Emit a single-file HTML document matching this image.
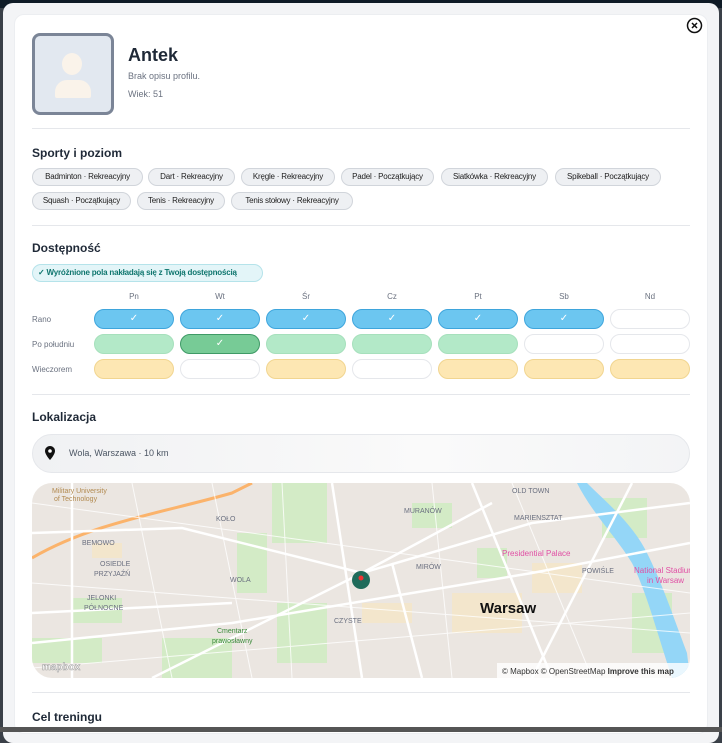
<!DOCTYPE html>
<html><head><meta charset="utf-8"><style>
*{box-sizing:border-box;margin:0;padding:0}
body{width:722px;height:732px;overflow:hidden;background:#3a4048;font-family:"Liberation Sans",sans-serif;color:#1f2937;position:relative}
.top{position:absolute;left:0;top:0;width:722px;height:8px;background:#0f1b26}
.outer{position:absolute;left:3px;top:3px;width:716px;height:740px;background:#f3f4f6;border-radius:10px}
.card{position:absolute;left:14px;top:14px;width:694px;height:720px;background:#fff;border-radius:10px;border:1px solid #eceef1}
.bar{position:absolute;left:0;top:727px;width:722px;height:5px;background:#555}
.abs{position:absolute}
.hr{position:absolute;left:32px;width:658px;height:1px;background:#e5e7eb}
h3{position:absolute;left:32px;font-size:12px;font-weight:bold;color:#1f2937}
.chip{position:absolute;height:18px;border:1px solid #d1d5db;background:#eef0f3;border-radius:9px;font-size:8px;line-height:16px;text-align:center;color:#222;white-space:nowrap;overflow:hidden;letter-spacing:-0.2px}
.cell{position:absolute;width:80px;height:20px;border-radius:10px;border:1px solid #e5e7eb;background:#fff;color:#fff;font-size:10px;text-align:center;line-height:18px}
.b{background:#6cc6f0;border-color:#3ea5dc}
.g{background:#b3e9c8;border-color:#a6e0bc}
.gd{background:#77cb96;border-color:#3f9a66}
.y{background:#fde7b3;border-color:#f1d590}
.lbl{position:absolute;left:32px;font-size:8px;color:#6b7280}
.day{position:absolute;width:80px;text-align:center;font-size:8px;color:#6b7280}
</style></head><body>
<div class="top"></div>
<div class="outer"></div>
<div class="card"></div>
<svg class="abs" style="left:686px;top:17px" width="17" height="17" viewBox="0 0 17 17"><circle cx="8.5" cy="8.5" r="7" fill="none" stroke="#111" stroke-width="1.5"/><path d="M6 6l5 5M11 6l-5 5" stroke="#111" stroke-width="1.5"/></svg>
<div class="abs" style="left:32px;top:33px;width:82px;height:82px;border:3px solid #7b8597;border-radius:8px;background:#e2e8f0;overflow:hidden">
<div class="abs" style="left:27px;top:17px;width:20px;height:22px;border-radius:50%;background:#faf3ea"></div>
<div class="abs" style="left:20px;top:44px;width:36px;height:18px;border-radius:12px 12px 2px 2px;background:#faf3ea"></div>
</div>
<div class="abs" style="left:128px;top:45px;font-size:18px;font-weight:bold;color:#1f2937">Antek</div>
<div class="abs" style="left:128px;top:71px;font-size:9px;color:#6b7280">Brak opisu profilu.</div>
<div class="abs" style="left:128px;top:89px;font-size:9px;color:#6b7280">Wiek: 51</div>
<div class="hr" style="top:128px"></div>
<h3 style="top:146px">Sporty i poziom</h3>
<div class="chip" style="left:32px;top:168px;width:111px">Badminton · Rekreacyjny</div>
<div class="chip" style="left:148px;top:168px;width:87px">Dart · Rekreacyjny</div>
<div class="chip" style="left:241px;top:168px;width:94px">Kręgle · Rekreacyjny</div>
<div class="chip" style="left:341px;top:168px;width:93px">Padel · Początkujący</div>
<div class="chip" style="left:441px;top:168px;width:107px">Siatkówka · Rekreacyjny</div>
<div class="chip" style="left:555px;top:168px;width:106px">Spikeball · Początkujący</div>
<div class="chip" style="left:32px;top:192px;width:99px">Squash · Początkujący</div>
<div class="chip" style="left:137px;top:192px;width:88px">Tenis · Rekreacyjny</div>
<div class="chip" style="left:231px;top:192px;width:122px">Tenis stołowy · Rekreacyjny</div>
<div class="hr" style="top:225px"></div>
<h3 style="top:241px">Dostępność</h3>
<div class="abs" style="left:32px;top:264px;width:231px;height:18px;border:1px solid #b5e3ea;background:#e3f5f8;border-radius:9px;font-size:8px;font-weight:bold;color:#0f766e;line-height:16px;padding-left:5px;white-space:nowrap;overflow:hidden;letter-spacing:-0.2px">✓ Wyróżnione pola nakładają się z Twoją dostępnością</div>
<div class="day" style="left:94px;top:292px">Pn</div><div class="day" style="left:180px;top:292px">Wt</div><div class="day" style="left:266px;top:292px">Śr</div><div class="day" style="left:352px;top:292px">Cz</div><div class="day" style="left:438px;top:292px">Pt</div><div class="day" style="left:524px;top:292px">Sb</div><div class="day" style="left:610px;top:292px">Nd</div>
<div class="lbl" style="top:315px">Rano</div><div class="lbl" style="top:340px">Po południu</div><div class="lbl" style="top:365px">Wieczorem</div>
<div class="cell b" style="left:94px;top:309px">✓</div><div class="cell b" style="left:180px;top:309px">✓</div><div class="cell b" style="left:266px;top:309px">✓</div><div class="cell b" style="left:352px;top:309px">✓</div><div class="cell b" style="left:438px;top:309px">✓</div><div class="cell b" style="left:524px;top:309px">✓</div><div class="cell" style="left:610px;top:309px"></div>
<div class="cell g" style="left:94px;top:334px"></div><div class="cell gd" style="left:180px;top:334px">✓</div><div class="cell g" style="left:266px;top:334px"></div><div class="cell g" style="left:352px;top:334px"></div><div class="cell g" style="left:438px;top:334px"></div><div class="cell" style="left:524px;top:334px"></div><div class="cell" style="left:610px;top:334px"></div>
<div class="cell y" style="left:94px;top:359px"></div><div class="cell" style="left:180px;top:359px"></div><div class="cell y" style="left:266px;top:359px"></div><div class="cell" style="left:352px;top:359px"></div><div class="cell y" style="left:438px;top:359px"></div><div class="cell y" style="left:524px;top:359px"></div><div class="cell y" style="left:610px;top:359px"></div>
<div class="hr" style="top:394px"></div>
<h3 style="top:410px">Lokalizacja</h3>
<div class="abs" style="left:32px;top:434px;width:658px;height:39px;border:1px solid #e5e7eb;border-radius:20px;background:linear-gradient(90deg,#f0f1f3,#fafafa 60%,#f3f4f6);font-size:9px;color:#4b5563;line-height:37px;padding-left:36px">Wola, Warszawa · 10 km</div>
<svg class="abs" style="left:45px;top:446px" width="10" height="14" viewBox="0 0 10 14"><path d="M5 0C2.2 0 0 2.2 0 5c0 3.5 5 9 5 9s5-5.5 5-9C10 2.2 7.8 0 5 0z" fill="#111"/><circle cx="5" cy="5" r="1.8" fill="#fff"/></svg>
<div class="abs" style="left:32px;top:483px;width:658px;height:195px;border-radius:20px;overflow:hidden;background:#ebe6e1">
<svg width="658" height="195" viewBox="0 0 658 195">
<g fill="#d3ebc6"><rect x="240" y="0" width="55" height="60"/><rect x="205" y="50" width="30" height="60"/><rect x="40" y="115" width="50" height="25"/><rect x="245" y="120" width="50" height="60"/><rect x="0" y="155" width="70" height="25"/><rect x="380" y="20" width="40" height="25"/><rect x="445" y="65" width="30" height="30"/><rect x="570" y="15" width="45" height="40"/><rect x="600" y="110" width="40" height="60"/><rect x="130" y="155" width="70" height="40"/></g>
<g fill="#f3e6cc"><rect x="60" y="60" width="30" height="15"/><rect x="330" y="120" width="50" height="20"/><rect x="420" y="110" width="70" height="40"/><rect x="500" y="80" width="50" height="30"/></g>
<path d="M555 0 C575 20 600 40 615 70 C630 100 640 130 655 170 L658 195 L640 195 C625 150 615 110 600 80 C585 55 560 30 545 0Z" fill="#94d6f7"/>
<path d="M0 75 C60 40 130 30 200 10 L220 0" stroke="#fbb36b" stroke-width="3" fill="none"/>
<g stroke="#fff" stroke-width="2.5" fill="none"><path d="M0 50 L150 45 L330 90 L500 40 L658 20"/><path d="M0 160 L200 140 L350 115 L500 90 L658 60"/><path d="M120 195 L330 90 L460 20"/><path d="M300 0 L330 195"/><path d="M440 0 L520 195"/><path d="M40 0 L40 195"/><path d="M0 130 L200 120"/><path d="M360 80 L390 195"/><path d="M600 0 L500 195"/></g>
<g stroke="#fff" stroke-width="1" fill="none" opacity=".8"><path d="M0 20 L658 110"/><path d="M100 0 L140 195"/><path d="M180 0 L220 195"/><path d="M250 0 L260 195"/><path d="M400 0 L420 195"/><path d="M0 100 L658 150"/><path d="M480 0 L560 195"/><path d="M0 185 L658 130"/></g>
<circle cx="329" cy="97" r="9" fill="#1f6b5a"/><circle cx="329" cy="95" r="2.5" fill="#e33"/>
<text x="448" y="130" font-size="15" font-weight="bold" font-family="Liberation Sans" fill="#111">Warsaw</text>
<text x="470" y="73" font-size="8" font-family="Liberation Sans" fill="#e04fa4">Presidential Palace</text>
<text x="602" y="90" font-size="8" font-family="Liberation Sans" fill="#e04fa4">National Stadium</text>
<text x="615" y="100" font-size="8" font-family="Liberation Sans" fill="#e04fa4">in Warsaw</text>
<g font-size="7" font-family="Liberation Sans" fill="#6b7080"><text x="50" y="62">BEMOWO</text><text x="68" y="83">OSIEDLE</text><text x="62" y="93">PRZYJAŹŃ</text><text x="55" y="117">JELONKI</text><text x="52" y="127">PÓŁNOCNE</text><text x="198" y="99">WOLA</text><text x="184" y="38">KOŁO</text><text x="302" y="140">CZYSTE</text><text x="372" y="30">MURANÓW</text><text x="384" y="86">MIRÓW</text><text x="480" y="10">OLD TOWN</text><text x="482" y="37">MARIENSZTAT</text><text x="550" y="90">POWIŚLE</text></g>
<text x="20" y="10" font-size="7" font-family="Liberation Sans" fill="#b28a50">Military University</text>
<text x="22" y="18" font-size="7" font-family="Liberation Sans" fill="#b28a50">of Technology</text>
<text x="185" y="150" font-size="7" font-family="Liberation Sans" fill="#3a8a3a">Cmentarz</text>
<text x="180" y="160" font-size="7" font-family="Liberation Sans" fill="#3a8a3a">prawosławny</text>
<rect x="465" y="180" width="193" height="15" fill="#fff" opacity=".8"/>
<text x="470" y="191" font-size="8" font-family="Liberation Sans" fill="#333">© Mapbox © OpenStreetMap <tspan font-weight="bold">Improve this map</tspan></text>
<text x="10" y="187" font-size="10" font-weight="bold" font-family="Liberation Sans" fill="#fff" stroke="#999" stroke-width=".5">mapbox</text>
</svg></div>
<div class="hr" style="top:692px"></div>
<h3 style="top:710px">Cel treningu</h3>
<div class="bar"></div>
</body></html>
